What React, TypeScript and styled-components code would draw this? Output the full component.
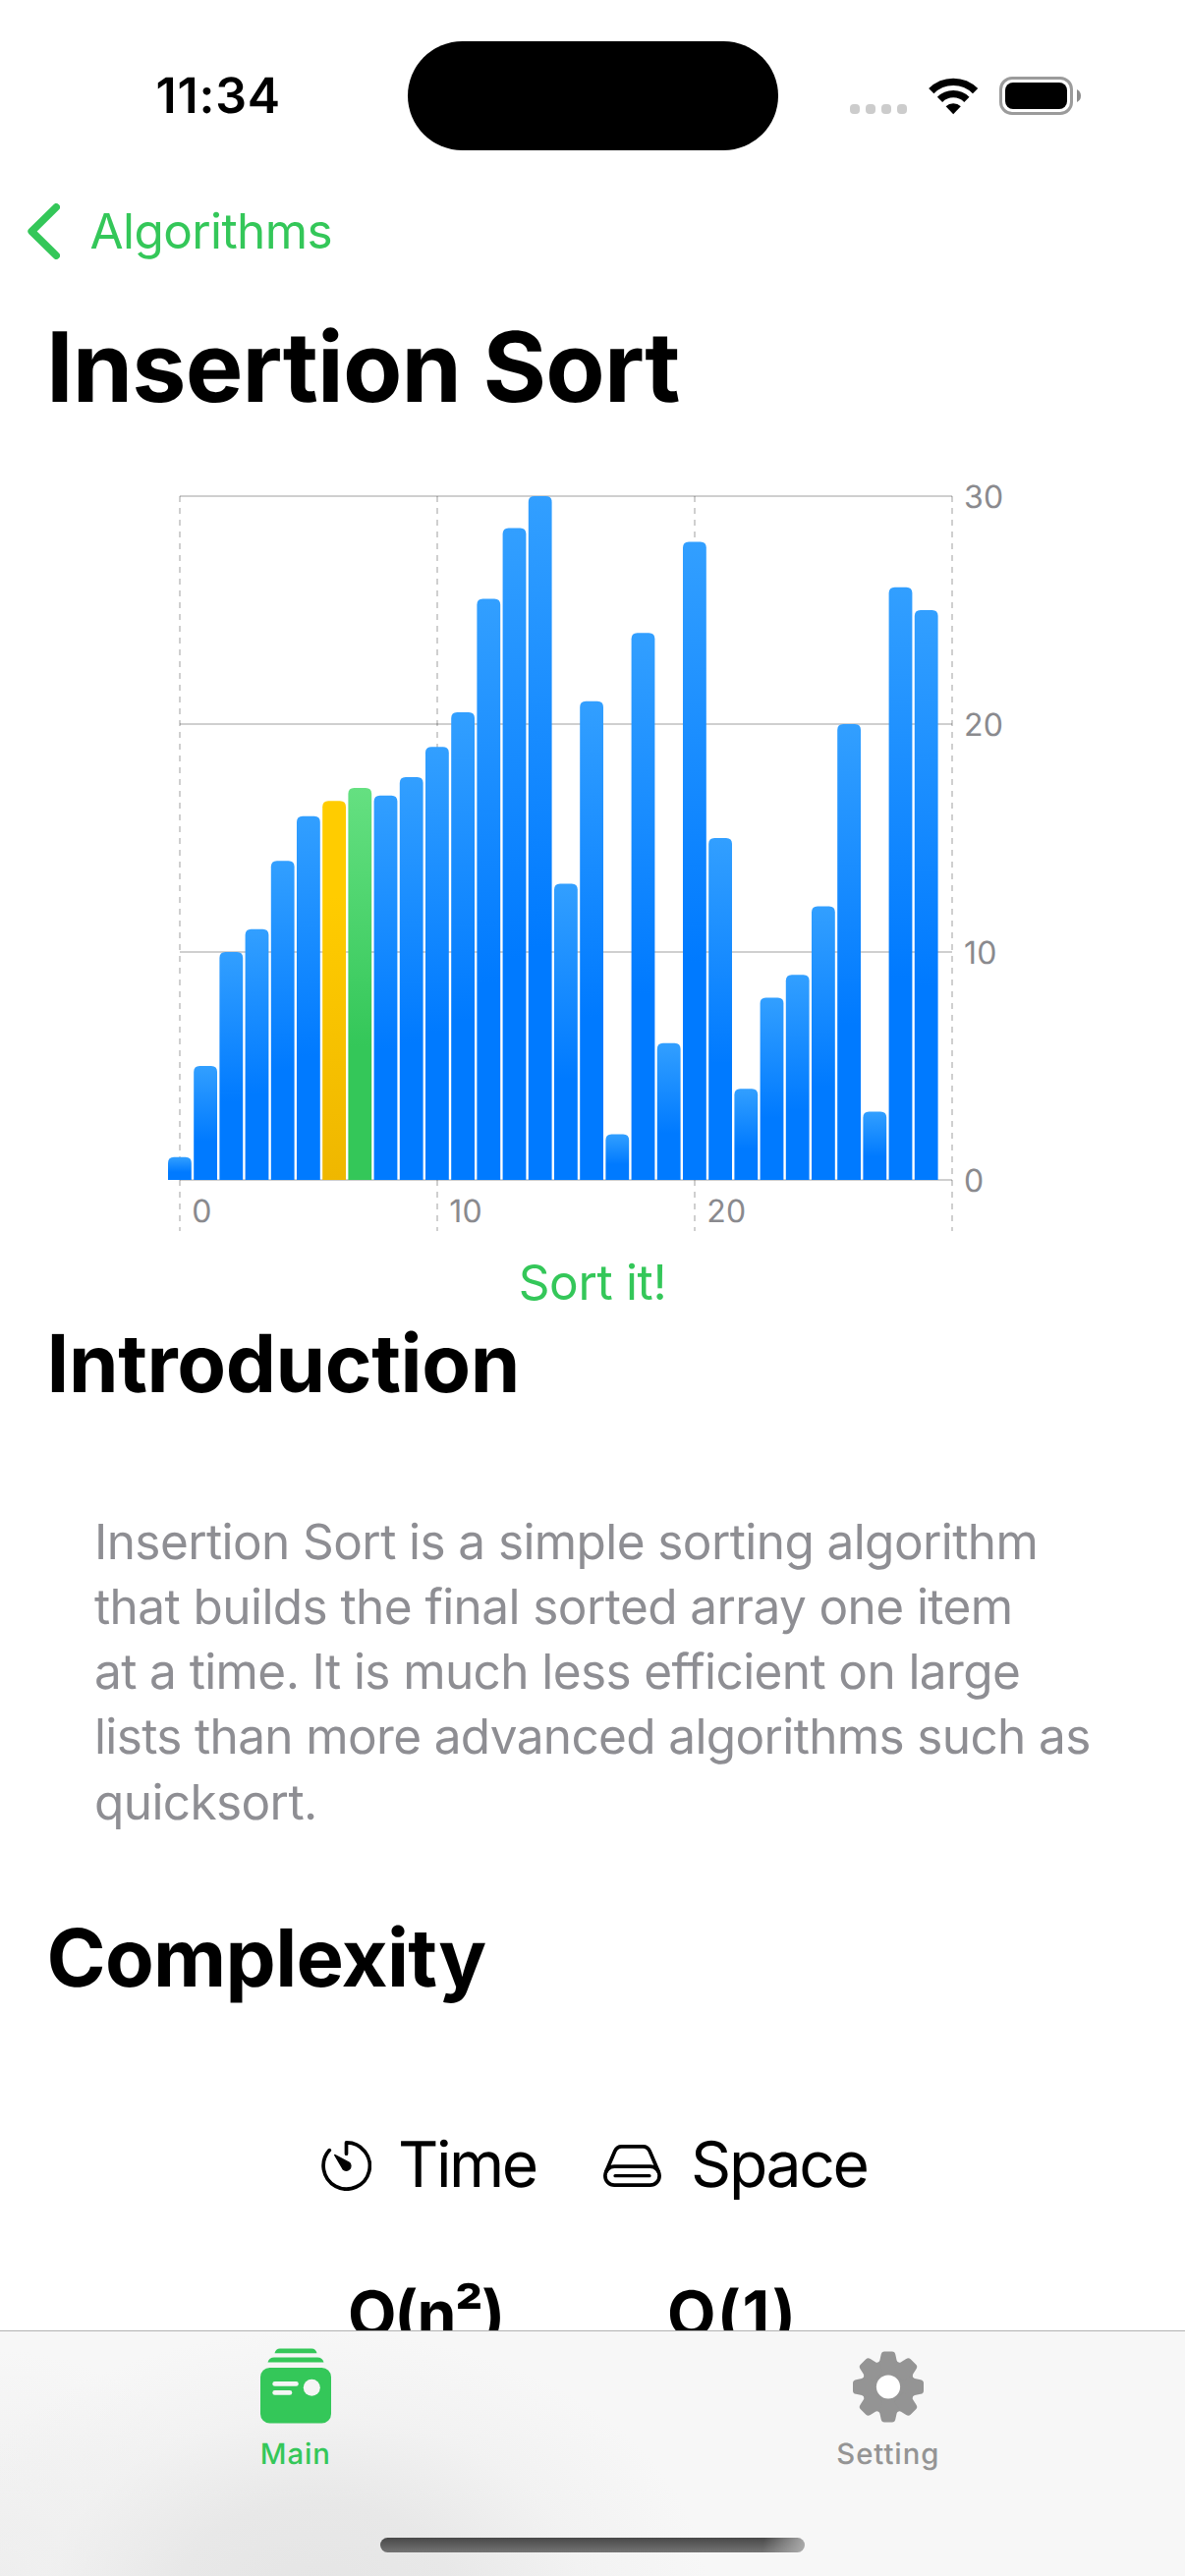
import React from "react";
import styled, { createGlobalStyle } from "styled-components";

const GREEN = "#34c759";

const GlobalStyle = createGlobalStyle`
  *, *::before, *::after { box-sizing: border-box; }
  body {
    margin: 0;
    background: #fff;
    color: #000;
    font-family: Inter, "Liberation Sans", sans-serif;
    text-rendering: geometricPrecision;
  }
  svg { display: block; flex: none; }
`;

const Screen = styled.div`
  display: flex;
  flex-direction: column;
  width: 1206px;
  height: 2622px;
  background: #fff;
  overflow: hidden;
`;

const StatusBar = styled.header`
  flex: none;
  display: flex;
  align-items: center;
  height: 195px;
`;

const Clock = styled.div`
  width: 414.5px;
  padding-left: 158.5px;
  font-size: 50px;
  font-weight: 600;
  line-height: 60px;
  letter-spacing: 0.8px;
`;

const Island = styled.div`
  width: 377px;
  height: 111px;
  margin-top: -1px;
  border-radius: 56px;
  background: #000;
`;

const StatusIcons = styled.div`
  display: flex;
  align-items: center;
  margin-left: 73.5px;
`;

const SignalDots = styled.div`
  display: flex;
  gap: 5.8px;
  margin: 27px 21.6px 0 0;
`;

const SignalDot = styled.span`
  width: 10.2px;
  height: 10px;
  border-radius: 4px;
  background: #ccc;
`;

const Battery = styled.div`
  display: flex;
  align-items: center;
  gap: 3.4px;
  margin-left: 21.4px;
`;

const BatteryShell = styled.div`
  width: 75px;
  height: 39px;
  padding: 3px;
  border: 3px solid #9b9b9b;
  border-radius: 13px;
`;

const BatteryLevel = styled.div`
  height: 100%;
  border-radius: 8px;
  background: #000;
`;

const Content = styled.main`
  flex: 1;
  min-height: 0;
  overflow: hidden;
`;

const BackButton = styled.button`
  display: flex;
  align-items: center;
  height: 80px;
  padding: 0 0 0 28px;
  gap: 30.5px;
  border: 0;
  background: none;
  color: ${GREEN};
  font: 400 49.5px/60px Inter, "Liberation Sans", sans-serif;
  letter-spacing: -0.6px;
`;

const PageTitle = styled.h1`
  margin: 38px 0 0 47px;
  font-size: 98.6px;
  font-weight: 700;
  line-height: 120px;
  letter-spacing: -0.85px;
  white-space: nowrap;
`;

const ChartFrame = styled.figure`
  margin: 47px 0 0;
`;

const AxisLabel = styled.text`
  fill: #8a8a8e;
  font-size: 32px;
  letter-spacing: 0.3px;
`;

const SortButton = styled.button`
  display: block;
  width: 100%;
  height: 70px;
  padding: 0;
  border: 0;
  background: none;
  color: ${GREEN};
  font: 400 49.5px/70px Inter, "Liberation Sans", sans-serif;
  letter-spacing: -0.35px;
  text-align: center;
`;

const SectionTitle = styled.h2<{ $top: number; $track: number }>`
  margin: ${(p) => p.$top}px 0 0 47.5px;
  font-size: 81.3px;
  font-weight: 700;
  line-height: 96px;
  letter-spacing: ${(p) => p.$track}px;
`;

const Description = styled.p`
  margin: 99.5px 0 0 96px;
  color: #8e8e93;
  font-size: 49.5px;
  line-height: 66.3px;
  white-space: nowrap;
`;

const DescriptionLine = styled.span<{ $track: number }>`
  display: block;
  letter-spacing: ${(p) => p.$track}px;
`;

const Metrics = styled.div`
  display: grid;
  grid-template-columns: 217px 267px;
  column-gap: 70px;
  row-gap: 72px;
  margin: 123.5px 0 0 327px;
`;

const MetricName = styled.div<{ $gap: number; $track: number }>`
  display: flex;
  align-items: center;
  gap: ${(p) => p.$gap}px;
  height: 80px;
  font-size: 64.2px;
  line-height: 80px;
  letter-spacing: ${(p) => p.$track}px;
  white-space: nowrap;
`;

const MetricValue = styled.div<{ $indent: number; $track: number }>`
  height: 80px;
  padding-left: ${(p) => p.$indent}px;
  font-size: 64.2px;
  font-weight: 700;
  line-height: 80px;
  letter-spacing: ${(p) => p.$track}px;
  white-space: nowrap;
`;

const TabBar = styled.nav`
  flex: none;
  display: flex;
  flex-direction: column;
  height: 250px;
  border-top: 1px solid #b2b2b2;
  background:
    radial-gradient(ellipse 400px 270px at 320px 108%, #e5e5e5 0%, #e8e8e8 35%, rgba(240, 240, 240, 0.7) 68%, rgba(247, 247, 247, 0) 100%),
    radial-gradient(ellipse 240px 230px at 0 100%, #ededed 0%, rgba(247, 247, 247, 0) 100%),
    #f7f7f7;
`;

const Tabs = styled.div`
  display: grid;
  grid-template-columns: 1fr 1fr;
  height: 210px;
`;

const Tab = styled.a<{ $active?: boolean }>`
  display: flex;
  flex-direction: column;
  align-items: center;
  padding: 17px 1.4px 0 0;
  color: ${(p) => (p.$active ? GREEN : "#949494")};
`;

const TabLabel = styled.span`
  margin-top: 11.5px;
  font-size: 29.3px;
  font-weight: 500;
  line-height: 40px;
  letter-spacing: 0.95px;
`;

const HomeIndicator = styled.div`
  width: 432px;
  height: 15px;
  margin: 0 auto;
  border-radius: 8px;
  background:
    linear-gradient(98deg, rgba(180, 180, 180, 0) 90%, rgba(176, 176, 176, 0.95) 100%),
    linear-gradient(#484848, #747474);
`;

const WifiIcon = () => (
  <svg width="51" height="38" viewBox="0 0 51 38" fill="none" stroke="#000" strokeWidth="7.4">
    <path d="M2.8 13.6A31.7 31.7 0 0 1 47.6 13.6" />
    <path d="M11.5 22.3A19.4 19.4 0 0 1 38.9 22.3" />
    <path d="M25.2 37.3L17.6 29.3A10.9 10.9 0 0 1 32.8 29.3Z" fill="#000" stroke="none" />
  </svg>
);

const TimerIcon = () => (
  <svg width="51" height="51" viewBox="0 0 51 51" fill="none" stroke="#000" strokeWidth="3.7" strokeLinecap="round">
    <path d="M25.5 13.2V1.9A23.6 23.6 0 1 1 8.3 9.6" strokeLinejoin="round" />
    <path d="M13.6 14.4L28.6 22.3A4.6 4.6 0 0 1 22.1 29Z" fill="#000" strokeWidth="1.2" strokeLinejoin="round" />
  </svg>
);

const DriveIcon = () => (
  <svg width="59" height="43" viewBox="0 0 59 43" fill="none" stroke="#000" strokeWidth="3.7" strokeLinecap="round">
    <rect x="1.9" y="22.2" width="55.2" height="18.9" rx="9.4" />
    <path d="M2.8 27.4L11.8 6.6Q13.9 1.9 18.6 1.9H40.4Q45.1 1.9 47.2 6.6L56.2 27.4" />
    <path d="M12 31.7H47" strokeWidth="3.2" />
  </svg>
);

const CardsIcon = () => (
  <svg width="72" height="77" viewBox="0 0 72 77" fill="currentColor">
    <path d="M14.5 5.2Q15.5 0.5 20 0.5H52Q56.5 0.5 57.5 5.2Z" />
    <path d="M7.5 14.5Q9 9.5 14 9.5H58Q63 9.5 64.5 14.5Z" />
    <rect y="20" width="72" height="56.5" rx="9.5" />
    <g fill="#f5f5f5">
      <rect x="12.3" y="34" width="26.5" height="4.8" rx="2.4" />
      <rect x="12.3" y="43" width="20" height="4.8" rx="2.4" />
      <circle cx="52.3" cy="40.3" r="8.5" />
    </g>
  </svg>
);

const GearIcon = () => (
  <svg width="72" height="77" viewBox="-36 -39.5 72 77" fill="currentColor">
    <circle r="26.2" />
    {[0, 45, 90, 135, 180, 225, 270, 315].map((angle) => (
      <path
        key={angle}
        transform={`rotate(${angle})`}
        d="M-12 -24Q-9 -25 -8.6 -27L-7.3 -33Q-6.7 -36 -3.9 -36H3.9Q6.7 -36 7.3 -33L8.6 -27Q9 -25 12 -24L6 -15H-6Z"
      />
    ))}
    <circle r="12.1" fill="#fff" />
  </svg>
);

type Tone = "blue" | "yellow" | "green";

const values = [
  1, 5, 10, 11, 14, 15.96, 16.63, 17.2, 16.86, 17.67, 19, 20.52, 25.5, 28.6, 30,
  13, 21, 2, 24, 6, 28, 15, 4, 8, 9, 12, 20, 3, 26, 25,
];

const toneOf = (index: number): Tone =>
  index === 6 ? "yellow" : index === 7 ? "green" : "blue";

const ORIGIN = 183;
const BASE = 721;
const STEP = 26.2;
const UNIT = 23.2;

const SortChart = () => (
  <ChartFrame>
    <svg width="1206" height="790" viewBox="0 0 1206 790">
      <defs>
        <linearGradient id="blue" x1="0" y1="0" x2="0" y2="1">
          <stop offset="0" stopColor="#329fff" />
          <stop offset="0.66" stopColor="#007aff" />
        </linearGradient>
        <linearGradient id="green" x1="0" y1="0" x2="0" y2="1">
          <stop offset="0" stopColor="#65e081" />
          <stop offset="0.66" stopColor="#34c759" />
        </linearGradient>
        <linearGradient id="yellow" x1="0" y1="0" x2="0" y2="1">
          <stop offset="0.25" stopColor="#ffcc00" />
          <stop offset="1" stopColor="#efb700" />
        </linearGradient>
      </defs>
      {[0, 10, 20, 30].map((tick) => (
        <g key={tick} stroke="#000" strokeOpacity="0.19" strokeWidth="2">
          <path d={`M${ORIGIN} ${BASE - tick * UNIT}H${ORIGIN + 30 * STEP}`} />
          <path d={`M${ORIGIN + tick * STEP} 25V773`} strokeDasharray="6 6" />
        </g>
      ))}
      {values.map((value, i) => {
        const x = ORIGIN - 12 + i * STEP;
        const top = BASE - value * UNIT;
        return (
          <path
            key={i}
            fill={`url(#${toneOf(i)})`}
            d={`M${x} ${BASE}V${top + 6}Q${x} ${top} ${x + 6} ${top}H${x + 17.8}Q${x + 23.8} ${top} ${x + 23.8} ${top + 6}V${BASE}Z`}
          />
        );
      })}
      {[0, 10, 20, 30].map((tick) => (
        <AxisLabel key={tick} x="981" y={BASE - tick * UNIT + 11.5}>{tick}</AxisLabel>
      ))}
      {[0, 10, 20].map((tick) => (
        <AxisLabel key={tick} x={ORIGIN + tick * STEP + 12.3} y="764">{tick}</AxisLabel>
      ))}
    </svg>
  </ChartFrame>
);

const description: [string, number][] = [
  ["Insertion Sort is a simple sorting algorithm", -0.59],
  ["that builds the final sorted array one item", -0.57],
  ["at a time. It is much less efficient on large", -0.6],
  ["lists than more advanced algorithms such as", -0.64],
  ["quicksort.", -0.6],
];

export default function App() {
  return (
    <>
      <GlobalStyle />
      <Screen>
        <StatusBar>
          <Clock>11:34</Clock>
          <Island />
          <StatusIcons>
            <SignalDots>
              <SignalDot />
              <SignalDot />
              <SignalDot />
              <SignalDot />
            </SignalDots>
            <WifiIcon />
            <Battery>
              <BatteryShell>
                <BatteryLevel />
              </BatteryShell>
              <svg width="4" height="13" viewBox="0 0 4 13">
                <path d="M0 0Q4 2 4 6.5T0 13Z" fill="#8c8c8c" />
              </svg>
            </Battery>
          </StatusIcons>
        </StatusBar>
        <Content>
          <BackButton>
            <svg width="33" height="57" viewBox="0 0 33 57" fill="none" stroke="currentColor" strokeWidth="7.6" strokeLinecap="round" strokeLinejoin="round">
              <path d="M29.2 3.9L4.2 28.5L29.2 53.1" />
            </svg>
            Algorithms
          </BackButton>
          <PageTitle>Insertion Sort</PageTitle>
          <SortChart />
          <SortButton>Sort it!</SortButton>
          <SectionTitle $top={0} $track={-0.4}>Introduction</SectionTitle>
          <Description>
            {description.map(([line, track]) => (
              <DescriptionLine key={line} $track={track}>{line}</DescriptionLine>
            ))}
          </Description>
          <SectionTitle $top={78} $track={-0.7}>Complexity</SectionTitle>
          <Metrics>
            <MetricName $gap={27} $track={-2.5}><TimerIcon />Time</MetricName>
            <MetricName $gap={30} $track={-2.3}><DriveIcon />Space</MetricName>
            <MetricValue $indent={27} $track={-2.1}>O(n²)</MetricValue>
            <MetricValue $indent={65} $track={1.4}>O(1)</MetricValue>
          </Metrics>
        </Content>
        <TabBar>
          <Tabs>
            <Tab $active>
              <CardsIcon />
              <TabLabel>Main</TabLabel>
            </Tab>
            <Tab>
              <GearIcon />
              <TabLabel>Setting</TabLabel>
            </Tab>
          </Tabs>
          <HomeIndicator />
        </TabBar>
      </Screen>
    </>
  );
}
